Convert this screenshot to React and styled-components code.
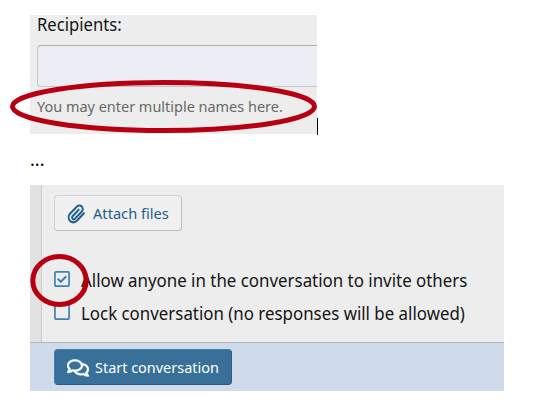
import React from "react";
import styled, { createGlobalStyle } from "styled-components";
import { FaRegComments } from "react-icons/fa";

const GlobalStyle = createGlobalStyle`
  * { box-sizing: border-box; }
  body { margin: 0; background: #fff; font-family: "Noto Sans", "Open Sans", sans-serif; }
`;

const Page = styled.main`
  position: relative;
  width: 552px;
  height: 410px;
  padding: 15px 0 0 30px;
  overflow: hidden;
  color: #141414;
`;

const Text = styled.span`
  display: block;
  width: max-content;
  white-space: nowrap;
  font-size: ${(p) => p.$size || 18}px;
  line-height: 24px;
  transform: scaleX(${(p) => p.$stretch || 1});
  transform-origin: left center;
`;

const RecipientRow = styled.div`
  display: flex;
  align-items: flex-end;
  height: 119px;
`;

const RecipientPanel = styled.section`
  width: 287px;
  height: 119px;
  padding-left: 7px;
  background: #ededed;
`;

const FieldLabel = styled.div`
  height: 24px;
  margin-top: -3px;
`;

const RecipientInput = styled.div`
  height: 42px;
  margin: 9px 0 7px;
  background: #edeef5;
  border: 1px solid #c6c6c8;
  border-top: 1px solid #b0b0b1;
  border-right: 0;
  border-radius: 4px 0 0 4px;
`;

const Hint = styled.div`
  color: #686868;
`;

const Caret = styled.span`
  width: 1px;
  height: 17px;
  margin-bottom: -1px;
  background: #000;
`;

const Gap = styled.div`
  height: 51px;
  padding-top: 13px;
  color: #000;
`;

const OptionsPanel = styled.section`
  display: flex;
  flex-direction: column;
  width: 474px;
  height: 206px;
  background: #ededed;
`;

const PanelBody = styled.div`
  display: flex;
  height: 157px;
`;

const Gutter = styled.div`
  width: 12px;
  background: #e2e2e2;
  border-right: 1px solid #cbcbcb;
`;

const Options = styled.div`
  flex: 1;
  padding: 10px 0 0 12px;
`;

const AttachButton = styled.button`
  display: flex;
  align-items: center;
  width: 128px;
  height: 36px;
  padding: 0 0 1px 12px;
  gap: 7px;
  border: 1px solid;
  border-color: #d2d2d2 #bfbfbf #bfbfbf #d2d2d2;
  border-radius: 4px;
  background: #f0f0f0;
  color: #225d8c;
  font-family: inherit;
`;

const ClipIcon = styled.svg`
  width: 19px;
  height: 20px;
  margin-top: 2px;
  flex: none;
  fill: none;
  stroke: currentColor;
  stroke-width: 2.5;
  stroke-linecap: round;
  stroke-linejoin: round;
`;

const OptionList = styled.div`
  display: grid;
  gap: 9px;
  margin-top: 37px;
`;

const Option = styled.label`
  display: flex;
  height: 24px;
  gap: 11px;
`;

const Box = styled.svg`
  width: 16px;
  height: 16px;
  margin-top: 3px;
  flex: none;
  fill: none;
  stroke: #4480ae;
`;

const Footer = styled.footer`
  display: flex;
  height: 49px;
  padding: 6px 0 0 24px;
  border-top: 1px solid #b5b7bb;
  background: #cfdaea;
`;

const StartButton = styled.button`
  display: flex;
  align-items: center;
  width: 178px;
  height: 36px;
  padding: 0 0 0 12px;
  gap: 6px;
  border: 1px solid;
  border-color: #4480aa #2c5c82 #2c5c82 #4480aa;
  border-radius: 4px;
  background: #39709a;
  color: #fff;
  font-family: inherit;
`;

const CommentsIcon = styled(FaRegComments)`
  width: 22px;
  height: 20px;
  margin-top: 2px;
  flex: none;
  stroke: currentColor;
  stroke-width: 12;
`;

const Highlights = styled.svg`
  position: absolute;
  left: 0;
  top: 0;
  width: 552px;
  height: 410px;
  fill: none;
  stroke: #b60012;
  pointer-events: none;
`;

function Checkbox({ checked }) {
  return (
    <Box viewBox="0 0 16 16">
      <rect x="0.9" y="0.9" width="14.2" height="14.2" rx="1" strokeWidth="1.7" />
      {checked && <path d="M3.8 7.8 6.8 10.8 12.3 5.3" strokeWidth="2" />}
    </Box>
  );
}

function Paperclip() {
  return (
    <ClipIcon viewBox="0 0 24 24" preserveAspectRatio="none">
      <path d="M21.4 11.1 12.5 20.2a5.7 5.7 0 0 1-8.7-8.5l8.5-8.5a4.3 4.3 0 0 1 6.5 5.7l-8.6 8.6a2.1 2.1 0 0 1-3.2-2.9l7.8-7.8" />
    </ClipIcon>
  );
}

export default function App() {
  return (
    <>
      <GlobalStyle />
      <Page>
        <RecipientRow>
          <RecipientPanel>
            <FieldLabel><Text $size={18} $stretch={0.925}>Recipients:</Text></FieldLabel>
            <RecipientInput />
            <Hint><Text $size={15} $stretch={0.964}>You may enter multiple names here.</Text></Hint>
          </RecipientPanel>
          <Caret />
        </RecipientRow>
        <Gap><Text $size={18}>...</Text></Gap>
        <OptionsPanel>
          <PanelBody>
            <Gutter />
            <Options>
              <AttachButton type="button">
                <Paperclip />
                <Text $size={15} $stretch={0.975}>Attach files</Text>
              </AttachButton>
              <OptionList>
                <Option>
                  <Checkbox checked />
                  <Text $size={18} $stretch={0.938}>Allow anyone in the conversation to invite others</Text>
                </Option>
                <Option>
                  <Checkbox />
                  <Text $size={18} $stretch={0.937}>Lock conversation (no responses will be allowed)</Text>
                </Option>
              </OptionList>
            </Options>
          </PanelBody>
          <Footer>
            <StartButton type="button">
              <CommentsIcon />
              <Text $size={15} $stretch={0.963}>Start conversation</Text>
            </StartButton>
          </Footer>
        </OptionsPanel>
        <Highlights viewBox="0 0 552 410">
          <ellipse cx="163.5" cy="106.5" rx="151" ry="24" strokeWidth="5" />
          <ellipse cx="59.5" cy="280.5" rx="26.7" ry="24" strokeWidth="5" />
        </Highlights>
      </Page>
    </>
  );
}
